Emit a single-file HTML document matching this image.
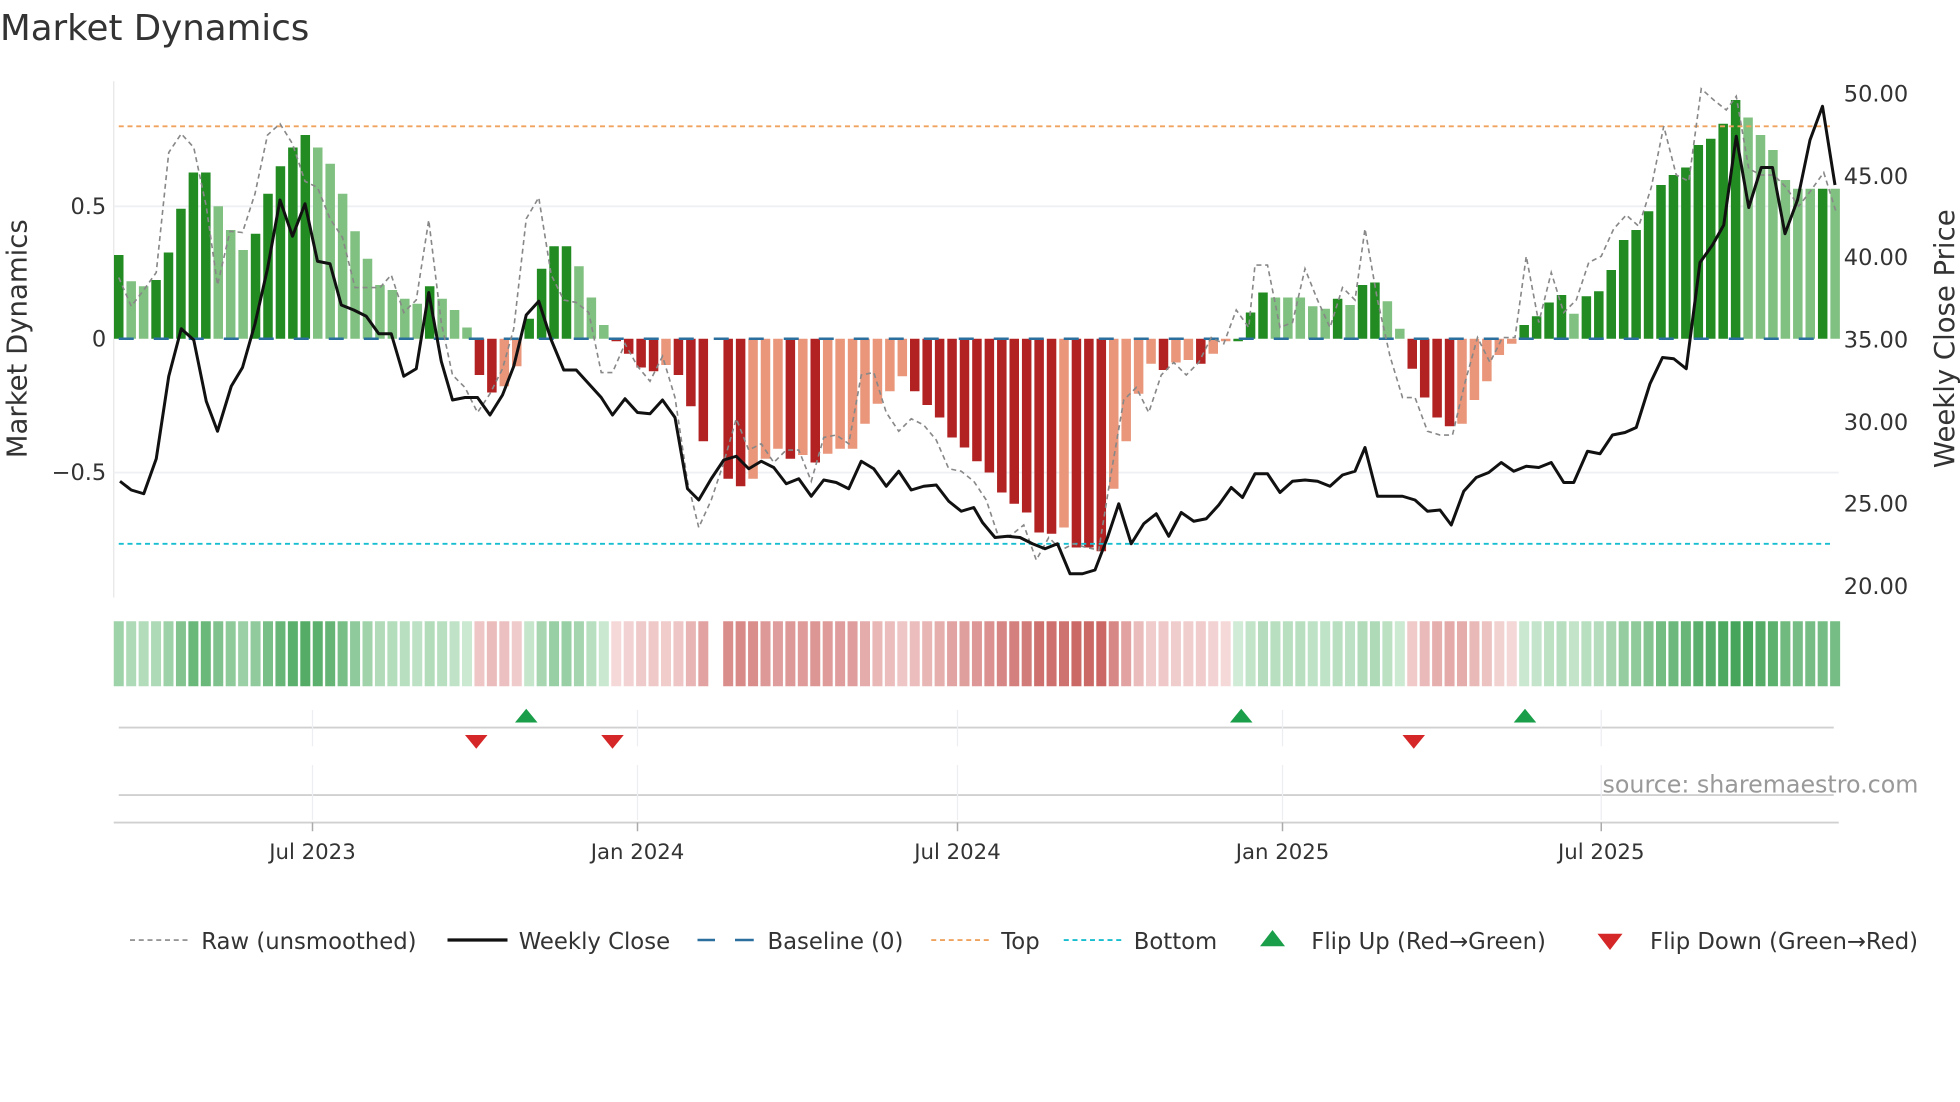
<!DOCTYPE html>
<html><head><meta charset="utf-8"><style>
html,body{margin:0;padding:0;background:#fff;}
svg{display:block;font-family:"DejaVu Sans","Liberation Sans",sans-serif;}
</style></head><body>
<svg id="s" width="1960" height="1102" viewBox="0 0 1568 881.6" xmlns="http://www.w3.org/2000/svg">
<text x="0" y="32" font-size="28.5" fill="#333">Market Dynamics</text>
<line x1="91" y1="65" x2="91" y2="478" stroke="#e6e6e6" stroke-width="1"/>
<line x1="91" y1="165" x2="1471" y2="165" stroke="#eef0f4" stroke-width="1.5"/>
<line x1="91" y1="378" x2="1471" y2="378" stroke="#eef0f4" stroke-width="1.5"/>
<g font-size="18" fill="#333">
<text x="85" y="171" text-anchor="end">0.5</text>
<text x="85" y="277" text-anchor="end">0</text>
<text x="85" y="384" text-anchor="end">−0.5</text>
<text x="1475" y="81">50.00</text>
<text x="1475" y="147">45.00</text>
<text x="1475" y="212">40.00</text>
<text x="1475" y="278">35.00</text>
<text x="1475" y="344">30.00</text>
<text x="1475" y="409">25.00</text>
<text x="1475" y="475">20.00</text>
</g>
<text transform="translate(21,271) rotate(-90)" font-size="22" fill="#333" text-anchor="middle">Market Dynamics</text>
<text transform="translate(1563,271) rotate(-90)" font-size="22" fill="#333" text-anchor="middle">Weekly Close Price</text>
<g id="bars"></g>
<line x1="95" y1="101" x2="1467" y2="101" stroke="#f0a35e" stroke-width="1.5" stroke-dasharray="4,3"/>
<line x1="95" y1="435" x2="1467" y2="435" stroke="#17becf" stroke-width="1.5" stroke-dasharray="4,3"/>
<line x1="95" y1="271" x2="1467" y2="271" stroke="#2a6f9e" stroke-width="2" stroke-dasharray="12,16"/>
<polyline fill="none" stroke="#888" stroke-width="1.3" stroke-dasharray="4,3" points="95,222 105,245 115,232 125,218 135,122 145,107 155,118 165,165 174,228 184,185 194,186 204,155 214,108 224,99 234,115 244,145 254,150 264,175 274,190 284,230 294,230 304,230 313,220 323,250 333,240 343,176 353,258 362,300 372,310 382,330 392,315 402,295 411,263 421,175 431,158 441,220 451,240 461,242 471,250 481,298 490,298 500,275 510,293 520,305 530,285 540,318 550,385 559,422 569,400 579,370 589,335 599,360 609,355 619,370 629,360 639,360 649,385 659,350 669,348 679,355 689,300 699,298 709,330 719,345 729,335 739,340 749,352 759,375 769,377 779,385 789,400 799,430 809,428 819,420 829,448 839,430 849,440 859,435 869,438 879,440 889,378 899,320 909,310 919,330 929,300 939,290 949,300 959,290 969,270 979,275 989,248 999,262 1004,212 1014,212 1024,262 1034,258 1044,215 1054,240 1064,262 1074,230 1084,240 1092,183 1102,240 1112,285 1122,318 1132,318 1142,345 1152,348 1162,348 1172,306 1182,270 1192,290 1202,270 1212,270 1221,205 1231,258 1241,218 1251,250 1261,240 1271,210 1281,205 1291,183 1301,172 1311,181 1321,150 1331,101 1341,140 1351,145 1361,71 1371,80 1381,88 1389,77 1399,135 1409,140 1419,140 1429,150 1439,165 1449,152 1459,138 1469,170"/>
<polyline fill="none" stroke="#111" stroke-width="2.4" stroke-linejoin="round" points="96,385 105,392 115,395 125,367 135,301 145,263 155,272 165,321 174,345 185,309 194,294 204,259 214,215 224,160 234,189 244,163 254,209 264,211 273,244 283,248 293,253 303,267 313,267 323,301 333,295 343,234 353,289 362,320 372,318 382,318 392,332 402,316 411,293 421,252 431,241 441,272 451,296 461,296 471,307 481,318 490,332 500,319 510,330 520,331 530,320 540,334 550,391 559,400 569,383 579,368 589,365 599,375 609,369 619,374 629,387 639,383 649,397 659,384 669,386 679,391 689,369 699,375 709,389 719,377 729,392 739,389 749,388 759,401 769,409 779,406 786,418 796,430 806,429 816,430 826,435 836,439 846,435 856,459 866,459 876,456 886,430 895,403 905,435 915,419 925,411 935,429 945,410 955,417 965,415 975,404 985,390 994,398 1004,379 1014,379 1024,394 1034,385 1044,384 1054,385 1064,389 1074,380 1084,377 1092,358 1102,397 1112,397 1122,397 1132,400 1142,409 1152,408 1161,420 1171,393 1181,382 1191,378 1201,370 1211,377 1221,373 1231,374 1241,370 1251,386 1259,386 1270,361 1280,363 1290,348 1300,346 1309,342 1320,307 1330,286 1339,287 1349,295 1360,210 1370,196 1379,180 1389,109 1399,166 1409,134 1418,134 1428,187 1438,160 1448,112 1458,85 1468,148"/>
<g id="band"></g>
<line x1="95" y1="582" x2="1467" y2="582" stroke="#d0d0d0" stroke-width="1.5"/>
<line x1="95" y1="636" x2="1467" y2="636" stroke="#d0d0d0" stroke-width="1.5"/>
<line x1="91" y1="658" x2="1471" y2="658" stroke="#d0d0d0" stroke-width="1.5"/>
<g stroke="#eceef2" stroke-width="1">
<line x1="250" y1="568" x2="250" y2="597"/><line x1="250" y1="612" x2="250" y2="656"/>
<line x1="510" y1="568" x2="510" y2="597"/><line x1="510" y1="612" x2="510" y2="656"/>
<line x1="766" y1="568" x2="766" y2="597"/><line x1="766" y1="612" x2="766" y2="656"/>
<line x1="1026" y1="568" x2="1026" y2="597"/><line x1="1026" y1="612" x2="1026" y2="656"/>
<line x1="1281" y1="568" x2="1281" y2="597"/><line x1="1281" y1="612" x2="1281" y2="656"/>
</g>
<g stroke="#aaa" stroke-width="1.2">
<line x1="250" y1="658" x2="250" y2="665"/><line x1="510" y1="658" x2="510" y2="665"/><line x1="766" y1="658" x2="766" y2="665"/><line x1="1026" y1="658" x2="1026" y2="665"/><line x1="1281" y1="658" x2="1281" y2="665"/>
</g>
<g fill="#1a9e4a"><polygon points="412,578 430,578 421,567"/><polygon points="984,578 1002,578 993,567"/><polygon points="1211,578 1229,578 1220,567"/></g>
<g fill="#d62728"><polygon points="372,588 390,588 381,599"/><polygon points="481,588 499,588 490,599"/><polygon points="1122,588 1140,588 1131,599"/></g>
<text x="1282" y="634" font-size="19" fill="#999">source: sharemaestro.com</text>
<g font-size="17" fill="#333" text-anchor="middle">
<text x="250" y="687">Jul 2023</text><text x="510" y="687">Jan 2024</text><text x="766" y="687">Jul 2024</text><text x="1026" y="687">Jan 2025</text><text x="1281" y="687">Jul 2025</text>
</g>
<g font-size="18.2" fill="#333">
<line x1="104" y1="752" x2="150" y2="752" stroke="#888" stroke-width="1.3" stroke-dasharray="4,3"/>
<text x="161" y="759">Raw (unsmoothed)</text>
<line x1="358" y1="752" x2="406" y2="752" stroke="#111" stroke-width="2.6"/>
<text x="415" y="759">Weekly Close</text>
<line x1="558" y1="752" x2="572" y2="752" stroke="#2a6f9e" stroke-width="2"/>
<line x1="588" y1="752" x2="603" y2="752" stroke="#2a6f9e" stroke-width="2"/>
<text x="614" y="759">Baseline (0)</text>
<line x1="745" y1="752" x2="791" y2="752" stroke="#f0a35e" stroke-width="1.5" stroke-dasharray="4,3"/>
<text x="801" y="759">Top</text>
<line x1="851" y1="752" x2="897" y2="752" stroke="#17becf" stroke-width="1.5" stroke-dasharray="4,3"/>
<text x="907" y="759">Bottom</text>
<polygon points="1008,757 1028,757 1018,744" fill="#1a9e4a"/>
<text x="1049" y="759">Flip Up (Red→Green)</text>
<polygon points="1278,747 1298,747 1288,760" fill="#d62728"/>
<text x="1320" y="759">Flip Down (Green→Red)</text>
</g>
</svg>
<script>
var d="G204 g225 g229 G224 G202 G167 G138 G138 g165 g184 g200 G187 G155 G133 G118 G108 g118 g131 g155 g185 g207 g228 g232 g239 g243 G229 g239 g248 g262 R300 R314 r309 r293 G255 G215 G197 G197 g213 g238 g260 R273 R283 R294 R297 r292 R300 R325 R353 x R383 R389 r383 r367 r359 R367 r364 R370 r363 r359 r359 r339 r323 r313 r301 R313 R324 R334 R350 R358 R369 R378 R394 R403 R410 R426 R427 r422 R438 R438 R441 r391 r353 r315 r291 R296 r290 r288 R291 r283 r273 G273 G250 G234 g238 g238 g238 g245 g247 G239 g244 G228 G226 g241 g263 R295 R318 R334 R341 r339 r320 r305 r284 r275 G260 G253 G242 G236 g251 G237 G233 G216 G192 G184 G169 G148 G140 G134 G116 G111 G99 G80 g94 g108 g120 g144 g151 g151 G151 g151".split(" ");
var col={G:"#228b22",g:"#80c080",R:"#b22222",r:"#e9967a"};
var ns="http://www.w3.org/2000/svg",b=document.getElementById("bars"),bd=document.getElementById("band");
function lerp(a,c,t){return "rgb("+a.map(function(v,k){return Math.round(v+(c[k]-v)*t)}).join(",")+")";}
d.forEach(function(s,i){
 if(s=="x")return;
 var t=s[0],y=+s.slice(1),x=95+9.95*i;
 var r=document.createElementNS(ns,"rect");
 var top=Math.min(y,271),h=Math.max(Math.abs(271-y),0.8);
 r.setAttribute("x",x-3.8);r.setAttribute("y",top);r.setAttribute("width",7.6);r.setAttribute("height",h);r.setAttribute("fill",col[t]);b.appendChild(r);
 var v=Math.abs(271-y)/213,k=Math.min(v/0.85,1);
 var g=(t=="G"||t=="g");
 var c=g?lerp([210,236,215],[70,165,90],k):lerp([245,218,218],[200,95,92],k);
 var q=document.createElementNS(ns,"rect");
 q.setAttribute("x",x-4);q.setAttribute("y",497);q.setAttribute("width",8);q.setAttribute("height",52);q.setAttribute("fill",c);bd.appendChild(q);
});
</script>
</body></html>
